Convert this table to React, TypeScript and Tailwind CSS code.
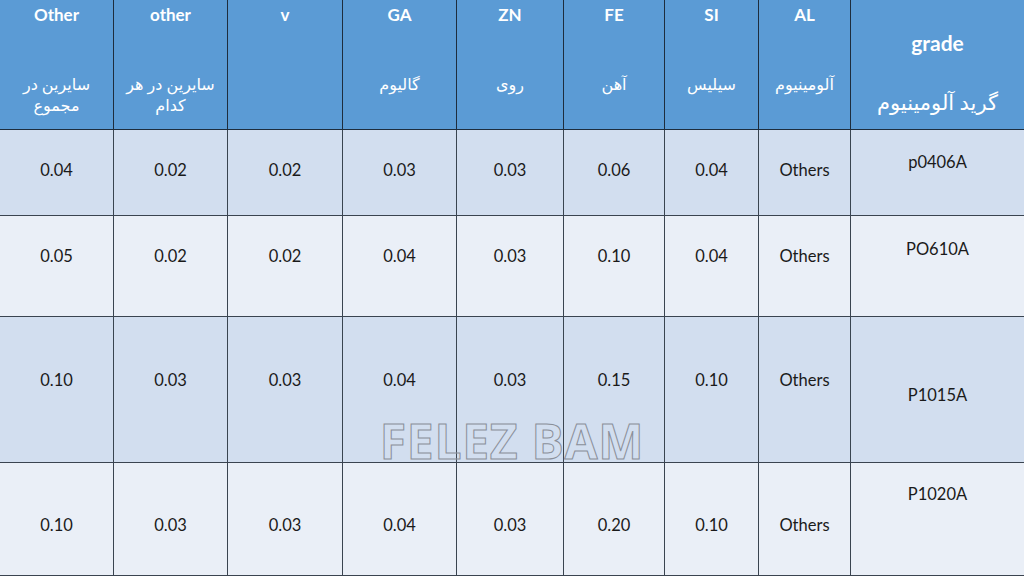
import React from "react";

const cols = "grid-cols-[114px_114px_115px_114px_107px_101px_94px_92px_173px]";

const headers: { en: string; fa: string[] }[] = [
  { en: "Other", fa: ["سایرین در", "مجموع"] },
  { en: "other", fa: ["سایرین در هر", "کدام"] },
  { en: "v", fa: [] },
  { en: "GA", fa: ["گالیوم"] },
  { en: "ZN", fa: ["روی"] },
  { en: "FE", fa: ["آهن"] },
  { en: "SI", fa: ["سیلیس"] },
  { en: "AL", fa: ["آلومینیوم"] },
];

const rows = [
  { vals: ["0.04", "0.02", "0.02", "0.03", "0.03", "0.06", "0.04", "Others"], grade: "p0406A", h: "h-[86px]", pad: "pt-[30px]", gpad: "pt-[22px]", bg: "bg-[#d2deef]" },
  { vals: ["0.05", "0.02", "0.02", "0.04", "0.03", "0.10", "0.04", "Others"], grade: "PO610A", h: "h-[101px]", pad: "pt-[30px]", gpad: "pt-[23px]", bg: "bg-[#eaeff7]" },
  { vals: ["0.10", "0.03", "0.03", "0.04", "0.03", "0.15", "0.10", "Others"], grade: "P1015A", h: "h-[146px]", pad: "pt-[53px]", gpad: "pt-[68px]", bg: "bg-[#d2deef]" },
  { vals: ["0.10", "0.03", "0.03", "0.04", "0.03", "0.20", "0.10", "Others"], grade: "P1020A", h: "h-[113px]", pad: "pt-[52px]", gpad: "pt-[21px]", bg: "bg-[#eaeff7]" },
];

const font = "font-['Lato','DejaVu_Sans',sans-serif]";

export default function App() {
  return (
    <div className={`relative w-[1024px] h-[576px] overflow-hidden bg-white ${font}`}>
      <div className={`grid ${cols}`}>
        {headers.map((h, i) => (
          <div
            key={i}
            className="h-[130px] bg-[#5b9bd5] border-r border-b border-[#1e2d3d] flex flex-col items-center text-white"
          >
            <div className="pt-[4px] text-[17px] leading-[22px] font-bold">{h.en}</div>
            <div dir="rtl" className="pt-[47px] text-[16px] leading-[21px] text-center font-normal">
              {h.fa.map((l, j) => (
                <div key={j}>{l}</div>
              ))}
            </div>
          </div>
        ))}
        <div className="h-[130px] bg-[#5b9bd5] border-b border-[#1e2d3d] flex flex-col items-center text-white">
          <div className="pt-[29px] text-[21px] leading-[28px] font-bold">grade</div>
          <div dir="rtl" className="pt-[31px] text-[21px] leading-[28px] font-normal">گرید آلومینیوم</div>
        </div>
        {rows.map((r, ri) =>
          [
            ...r.vals.map((v, ci) => (
              <div
                key={`${ri}-${ci}`}
                className={`${r.h} ${r.bg} ${r.pad} border-r border-b border-[#3a4450] text-center text-[16.5px] leading-[20px] text-[#1a1a1a]`}
              >
                {v}
              </div>
            )),
            <div
              key={`${ri}-g`}
              className={`${r.h} ${r.bg} ${r.gpad} border-b border-[#3a4450] text-center text-[16.5px] leading-[20px] text-[#1a1a1a]`}
            >
              {r.grade}
            </div>,
          ]
        )}
      </div>
      <div className="absolute left-[362px] top-[413px] w-[300px] whitespace-nowrap text-center text-[48px] leading-[56px] tracking-[0.7px] font-bold font-['Open_Sans',sans-serif] text-transparent [-webkit-text-stroke:1px_#8a8f99]">
        FELEZ BAM
      </div>
    </div>
  );
}
